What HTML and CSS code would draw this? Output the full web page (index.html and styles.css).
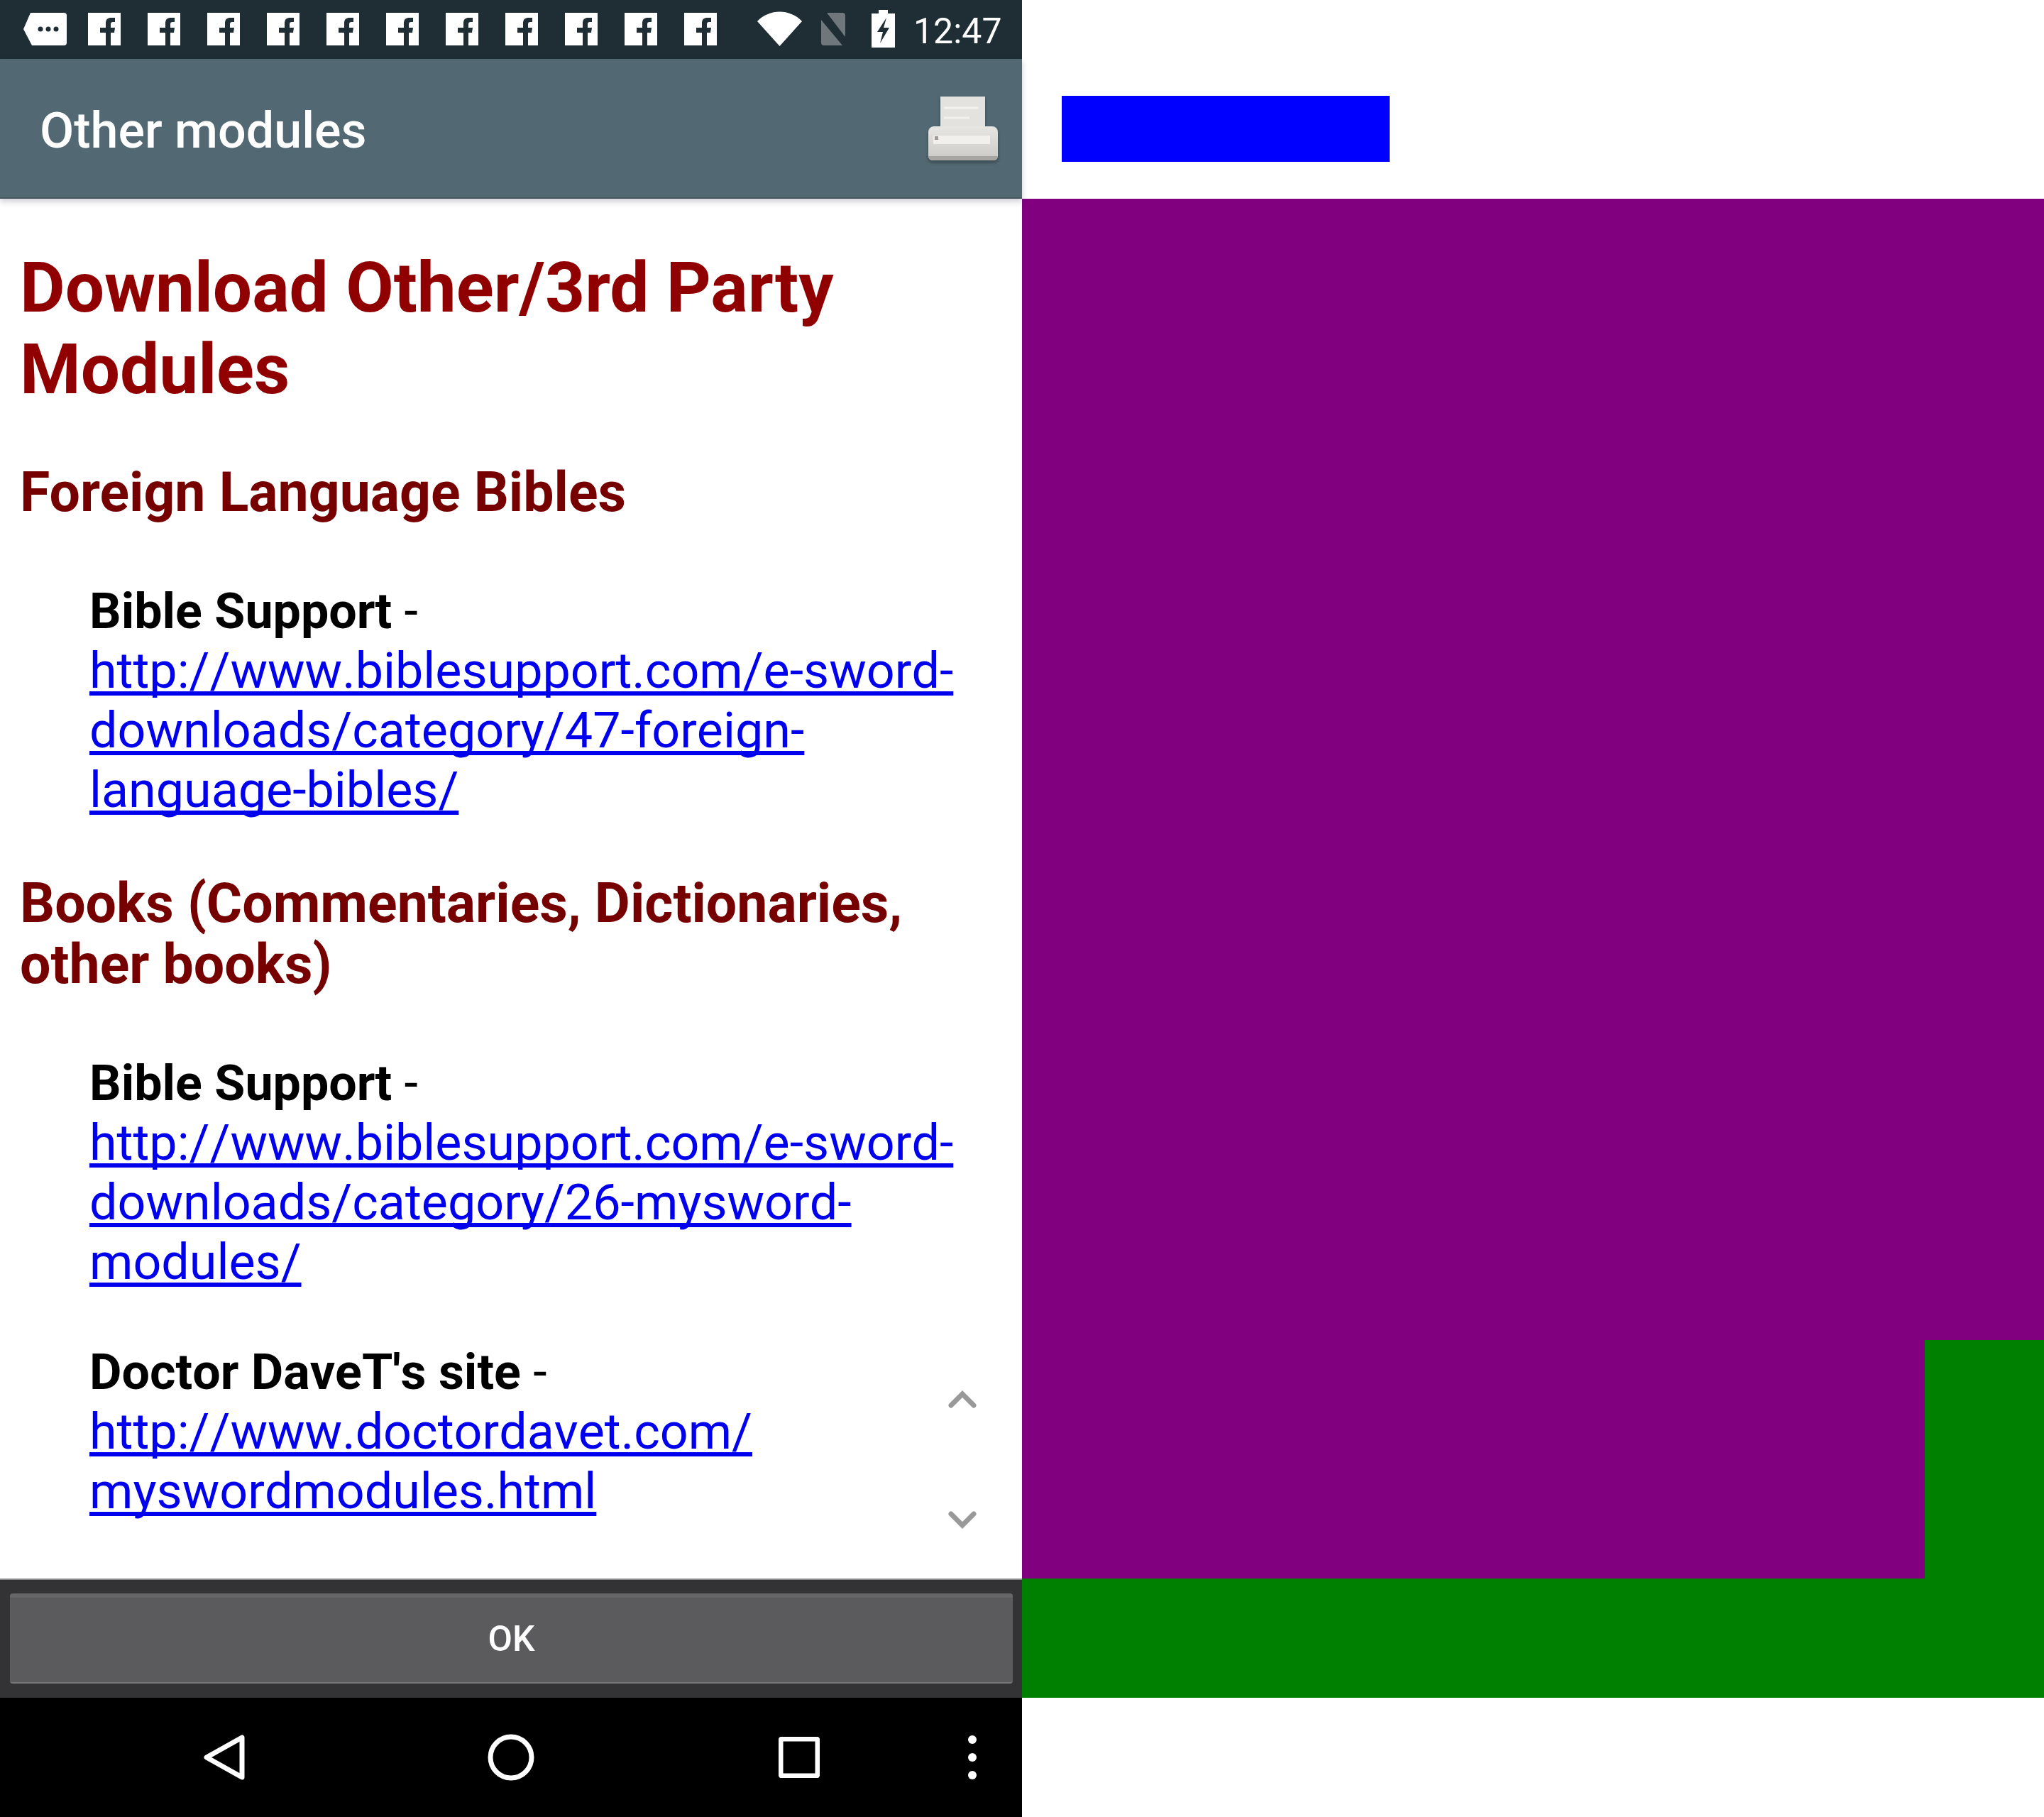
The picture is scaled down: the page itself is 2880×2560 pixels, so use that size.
FILE: index.html
```html
<!DOCTYPE html>
<html>
<head>
  <meta charset="utf-8" />
  <title>Other modules</title>
  <link rel="stylesheet" href="styles.css">
</head>
<body>
  <svg class="sprites" width="0" height="0">
    <symbol id="fb" viewBox="0 0 46 46">
      <rect width="46" height="46" fill="#fff"/>
      <path d="M25 46V28h-8v-7h8v-6c0-6 3-8 8-8h5v6h-3c-2 0-3 1-3 3v5h6l-1 7h-5v18z" fill="#1f2d35"/>
    </symbol>
    <linearGradient id="printer-body" x1="0" y1="0" x2="0" y2="1">
      <stop offset="0" stop-color="#e8e6e2"/>
      <stop offset="1" stop-color="#cbc9c5"/>
    </linearGradient>
  </svg>

  <div id="phone">
    <div id="statusbar">
      <svg class="msg-icon" viewBox="0 0 61 46">
        <path d="M10 0h47a4 4 0 0 1 4 4v38a4 4 0 0 1-4 4H12L0 23z" fill="#fff"/>
        <circle cx="24" cy="23" r="3.5" fill="#1f2d35"/>
        <circle cx="35" cy="23" r="3.5" fill="#1f2d35"/>
        <circle cx="46" cy="23" r="3.5" fill="#1f2d35"/>
      </svg>
      <div class="fb-row">
        <svg class="fb-icon"><use href="#fb"/></svg>
        <svg class="fb-icon"><use href="#fb"/></svg>
        <svg class="fb-icon"><use href="#fb"/></svg>
        <svg class="fb-icon"><use href="#fb"/></svg>
        <svg class="fb-icon"><use href="#fb"/></svg>
        <svg class="fb-icon"><use href="#fb"/></svg>
        <svg class="fb-icon"><use href="#fb"/></svg>
        <svg class="fb-icon"><use href="#fb"/></svg>
        <svg class="fb-icon"><use href="#fb"/></svg>
        <svg class="fb-icon"><use href="#fb"/></svg>
        <svg class="fb-icon"><use href="#fb"/></svg>
      </div>
      <svg class="wifi-icon" viewBox="0 0 63 49">
        <path d="M0 14C17-4 46-4 63 14L31.500 49z" fill="#fff"/>
      </svg>
      <svg class="sim-icon" viewBox="0 0 44 46">
        <path d="M13 0h22a4 4 0 0 1 4 4v30zM5 10l30 36H9a4 4 0 0 1-4-4z" fill="#6f777c"/>
      </svg>
      <svg class="battery-icon" viewBox="0 0 33 53">
        <path d="M10 0h13v5h10v48H0V5h10z" fill="#fff"/>
        <path d="M21 11L8 31h8l-4 16 13-22h-8z" fill="#1f2d35"/>
      </svg>
      <span class="clock">12:47</span>
    </div>

    <div id="titlebar">
      <span class="title">Other modules</span>
      <svg class="printer-icon" viewBox="0 0 98 94">
        <rect x="17" y="0" width="63" height="48" fill="#e4e2de"/>
        <path d="M22 16h48M22 30h36" stroke="#f3f1ee" stroke-width="3"/>
        <path d="M8 42h82a8 8 0 0 1 8 8v34a6 6 0 0 1-6 6H6a6 6 0 0 1-6-6V50a8 8 0 0 1 8-8z" fill="url(#printer-body)"/>
        <rect x="7" y="55" width="80" height="12" fill="#f2f0ec"/>
        <rect x="9" y="56" width="5" height="5" fill="#a09a94"/>
        <path d="M0 84a6 6 0 0 0 6 6h86a6 6 0 0 0 6-6z" fill="#a8a6a2"/>
      </svg>
    </div>

    <div id="content">
      <h1>Download Other/3rd Party Modules</h1>
      <h2>Foreign Language Bibles</h2>
      <p class="entry"><b>Bible Support</b> -<br>
        <a href="#">http://www.biblesupport.com/e-sword-<br>downloads/category/47-foreign-<br>language-bibles/</a></p>
      <h2>Books (Commentaries, Dictionaries, other books)</h2>
      <p class="entry"><b>Bible Support</b> -<br>
        <a href="#">http://www.biblesupport.com/e-sword-<br>downloads/category/26-mysword-<br>modules/</a></p>
      <p class="entry"><b>Doctor DaveT's site</b> -<br>
        <a href="#">http://www.doctordavet.com/<br>myswordmodules.html</a></p>

      <svg class="chevron chevron-up" viewBox="0 0 42 26">
        <path d="M5 22L21 6l16 16" />
      </svg>
      <svg class="chevron chevron-down" viewBox="0 0 42 26">
        <path d="M5 4l16 16L37 4" />
      </svg>
    </div>

    <div id="buttonbar">
      <button class="ok-btn">OK</button>
    </div>

    <div id="navbar">
      <svg class="nav-back" viewBox="0 0 58 64">
        <path d="M54 4v56L4 32z" />
      </svg>
      <svg class="nav-home" viewBox="0 0 66 66">
        <circle cx="33" cy="33" r="29" />
      </svg>
      <svg class="nav-recent" viewBox="0 0 58 58">
        <rect x="3" y="3" width="52" height="52" rx="2" />
      </svg>
      <div class="nav-menu">
        <span></span><span></span><span></span>
      </div>
    </div>
  </div>

  <div id="regions">
    <div class="region-top">
      <div class="region-blue"></div>
    </div>
    <div class="region-purple"></div>
    <div class="region-split">
      <div class="region-purple-fill"></div>
      <div class="region-green-side"></div>
    </div>
    <div class="region-green"></div>
  </div>
</body>
</html>
```

FILE: styles.css
```css
body {
  display: flex;
  margin: 0;
  width: 2880px;
  height: 2560px;
  background: #fff;
  font-family: 'Roboto', sans-serif;
  overflow: hidden;
}
.sprites {
  position: absolute;
}
#phone {
  width: 1440px;
  height: 2560px;
  display: flex;
  flex-direction: column;
}
#statusbar {
  height: 83px;
  background: #1f2d35;
  display: flex;
  align-items: flex-start;
  padding-left: 33px;
  box-sizing: border-box;
}
.msg-icon {
  width: 61px;
  height: 46px;
  margin-top: 18px;
}
.fb-row {
  display: flex;
  gap: 38px;
  margin: 18px 0 0 30px;
}
.fb-icon {
  width: 46px;
  height: 46px;
}
.wifi-icon {
  width: 63px;
  height: 49px;
  margin: 16px 0 0 57px;
}
.sim-icon {
  width: 44px;
  height: 46px;
  margin: 18px 0 0 22px;
}
.battery-icon {
  width: 33px;
  height: 53px;
  margin: 14px 0 0 32px;
}
.clock {
  margin-left: 26px;
  color: #fff;
  font-size: 50px;
  line-height: 88px;
}
#titlebar {
  height: 197px;
  background: #526872;
  display: flex;
  align-items: center;
  justify-content: space-between;
  padding: 0 34px 0 56px;
  border-bottom: 2px solid #46565f;
  box-sizing: border-box;
  box-shadow: 0 4px 8px rgba(60,60,90,0.25);
  position: relative;
}
.title {
  color: #fff;
  font-size: 70px;
  font-weight: 500;
  padding-top: 7px;
}
.printer-icon {
  width: 98px;
  height: 94px;
  margin-top: 4px;
  filter: drop-shadow(0 3px 2px rgba(30,40,45,0.5));
}
#content {
  height: 1944px;
  box-sizing: border-box;
  padding: 68px 0 0 28px;
  overflow: hidden;
  position: relative;
}
h1 {
  margin: 0 40px 73px 0;
  color: #900000;
  font-size: 98px;
  line-height: 115px;
  font-weight: 700;
}
h2 {
  margin: 0 40px 82px 0;
  color: #760000;
  font-size: 77px;
  line-height: 86px;
  font-weight: 700;
}
.entry {
  margin: 0 0 75px 98px;
  color: #000;
  font-size: 70px;
  line-height: 84px;
  white-space: nowrap;
  font-kerning: none;
}
.entry + .entry {
  margin-top: -4px;
}
.entry b {
  font-weight: 700;
}
.entry a {
  color: #0000ee;
  text-decoration-thickness: 6px;
  text-underline-offset: 5px;
  text-decoration-skip-ink: none;
}
.chevron {
  position: absolute;
  left: 1335px;
  width: 42px;
  height: 26px;
  fill: none;
  stroke: #999;
  stroke-width: 7;
  stroke-linecap: round;
}
.chevron-up {
  top: 1678px;
}
.chevron-down {
  top: 1849px;
}
#buttonbar {
  height: 168px;
  box-sizing: border-box;
  padding: 19px 13px 20px 14px;
  background: #333335;
  border-top: 2px solid #8a8a8a;
}
.ok-btn {
  display: block;
  width: 100%;
  height: 100%;
  padding: 0 0 3px;
  border: none;
  border-top: 6px solid #666668;
  border-bottom: 2px solid #777;
  border-radius: 4px;
  background: #5b5b5d;
  color: #fff;
  font-family: inherit;
  font-size: 50px;
  font-weight: 500;
}
#navbar {
  height: 168px;
  background: #000;
  display: flex;
  align-items: flex-start;
}
#navbar svg {
  fill: none;
  stroke: #fff;
  stroke-width: 7;
  stroke-linejoin: round;
}
.nav-back {
  width: 58px;
  height: 64px;
  margin: 52px 0 0 287px;
}
.nav-home {
  width: 66px;
  height: 66px;
  margin: 51px 0 0 342px;
}
.nav-recent {
  width: 58px;
  height: 58px;
  margin: 55px 0 0 344px;
}
.nav-menu {
  display: flex;
  flex-direction: column;
  gap: 13px;
  margin: 53px 0 0 209px;
}
.nav-menu span {
  width: 12px;
  height: 12px;
  border-radius: 50%;
  background: #fff;
}
#regions {
  width: 1440px;
  display: flex;
  flex-direction: column;
}
.region-top {
  height: 280px;
  box-sizing: border-box;
  padding: 135px 0 0 56px;
}
.region-blue {
  width: 462px;
  height: 93px;
  background: #0000ff;
}
.region-purple {
  height: 1608px;
  background: #800080;
}
.region-split {
  height: 336px;
  display: flex;
}
.region-purple-fill {
  flex: 1;
  background: #800080;
}
.region-green-side {
  width: 168px;
  background: #008000;
}
.region-green {
  height: 168px;
  background: #008000;
}
```
